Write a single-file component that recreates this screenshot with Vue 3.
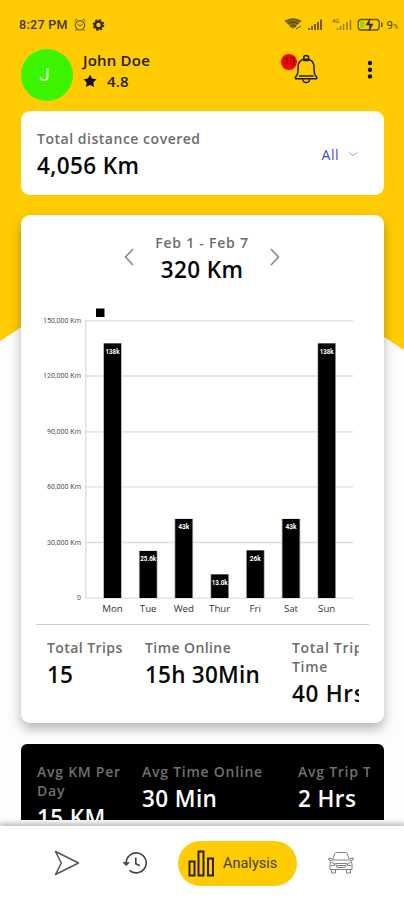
<script setup>
const bars = [
  { day: 'Mon', x: 112.5, top: 343.5, label: '138k', lw: 14 },
  { day: 'Tue', x: 148.2, top: 551, label: '25.6k', lw: 16 },
  { day: 'Wed', x: 183.8, top: 519, label: '43k', lw: 11 },
  { day: 'Thur', x: 219.7, top: 574.5, label: '13.0k', lw: 16 },
  { day: 'Fri', x: 255.3, top: 550.5, label: '26k', lw: 11 },
  { day: 'Sat', x: 291, top: 519, label: '43k', lw: 11 },
  { day: 'Sun', x: 326.7, top: 343.5, label: '138k', lw: 14 },
]
const grid = [
  { y: 320.8, label: '150,000 Km', w: 38 },
  { y: 376, label: '120,000 Km', w: 38 },
  { y: 431.8, label: '90,000 Km', w: 34 },
  { y: 486.8, label: '60,000 Km', w: 34 },
  { y: 542.5, label: '30,000 Km', w: 34 },
  { y: 598.2, label: '0', w: 4 },
]
const trips = [
  { label: 'Total Trips', value: '15' },
  { label: 'Time Online', value: '15h 30Min' },
  { label: 'Total Trip Time', value: '40 Hrs' },
]
const averages = [
  { label: 'Avg KM Per Day', value: '15 KM' },
  { label: 'Avg Time Online', value: '30 Min' },
  { label: 'Avg Trip Time', value: '2 Hrs' },
]
</script>

<template>
  <div class="phone">
    <svg class="backdrop" width="404" height="360" viewBox="0 0 404 360">
      <path d="M0 0H404V350L384 337Q202 222 20 328L0 341Z" fill="#ffcc03" />
    </svg>

    <div class="status">
      <span class="clock">8:27 PM</span>
      <svg class="status-left" width="34" height="16" viewBox="0 0 34 16" fill="none" stroke="#594b12">
        <circle cx="7" cy="8.3" r="4.7" stroke-width="1.1" />
        <path d="M1.5 4 4 1.8M12.5 4 10 1.8M4.6 7 7 9.2 9.5 7M3.5 12.5 2.5 14M10.5 12.5 11.5 14" />
        <circle cx="25.5" cy="8" r="3.5" stroke="#30290b" stroke-width="2.5" />
        <circle cx="25.5" cy="8" r="5.2" stroke="#30290b" stroke-width="1.2" stroke-dasharray="2.2 1.88" />
      </svg>
      <svg class="status-right" width="120" height="22" viewBox="284 14 120 22" fill="none" stroke="#5d4e0d">
        <path d="M285.5 21.5Q293 16.5 300.5 21.5L293 29Z" fill="#8c730a" stroke="none" />
        <path d="M285 21.5Q293 16.5 301 21.5M287.5 24Q293 20 298.5 24M290 26.8Q293 24.5 296 26.8" stroke-width="1.5" />
        <path d="m296 29 5-3" />
        <path d="M309 30v-2M312 30v-4M315 30v-6M318 30v-8M321 30V19.5" stroke-width="1.7" />
        <path d="M337.5 30v-2M340.5 30v-4M343.5 30v-6M347 30v-8M350.5 30V20" stroke="#947b17" stroke-width="1.5" />
        <text x="332" y="23" font-size="6" fill="#5d4e0d" stroke="none">4G</text>
        <rect x="358.2" y="19.5" width="21" height="10.5" rx="3" stroke-width="1.3" />
        <rect x="360" y="21.5" width="4.5" height="6.5" fill="#acd000" stroke="none" />
        <path d="m370 19-4 6h4l-1 6 4-7h-4Z" fill="#312800" stroke="#312800" stroke-width=".6" />
        <path d="M381.8 22.5v4.5" stroke-width="1.5" />
        <text x="386.5" y="28.5" font-size="11.5" fill="#473b0a" stroke="none">9</text>
        <text x="393.5" y="29" font-size="6.5" fill="#473b0a" stroke="none">%</text>
      </svg>
    </div>

    <header class="profile">
      <div class="avatar">J</div>
      <div class="who">
        <div class="name">John Doe</div>
        <div class="rating">
          <svg width="14" height="14" viewBox="0 0 24 24"><path d="m12 .8 3.5 7.1 7.8 1.1-5.6 5.6 1.3 7.8-7-3.7-7 3.7 1.3-7.8L.7 9l7.8-1.1Z" fill="#17130a" /></svg>
          <span>4.8</span>
        </div>
      </div>
      <div class="bell">
        <svg width="24" height="30" viewBox="294 54 24 30" fill="none" stroke="#211b00" stroke-width="1.5" stroke-linejoin="round">
          <path d="M303.7 59.2V57.8q0-2.3 2.5-2.3t2.5 2.3v1.4M303.5 59.2q-5.4 1.5-5.4 8 0 6.2-1.3 8.2l-1.3 1.5v1.9h21.2v-1.9l-1.4-1.5q-1.3-2-1.3-8.2 0-6.5-5.4-8Z" />
          <path d="M302.8 79.2q.2 3.3 3.4 3.3t3.4-3.3M299 76h14.5M303.3 60.6h5.8" />
        </svg>
        <span class="badge">10</span>
      </div>
      <svg class="more" width="6" height="20" viewBox="0 0 6 20" fill="#171300"><circle cx="3" cy="3" r="2.2" /><circle cx="3" cy="9.7" r="2.2" /><circle cx="3" cy="16.4" r="2.2" /></svg>
    </header>

    <main class="scroll">
      <section class="card total">
        <div>
          <div class="label">Total distance covered</div>
          <div class="value">4,056 Km</div>
        </div>
        <div class="filter">
          <span>All</span>
          <svg width="10" height="6" viewBox="0 0 10 6" fill="none" stroke="#78b4e4"><path d="m.8 1.5 4.2 3 4.2-3" /></svg>
        </div>
      </section>

      <section class="card week">
        <div class="range">
          <svg width="10" height="18" viewBox="0 0 10 18" fill="none" stroke="#888" stroke-width="1.6"><path d="M9 1 1.5 9 9 17" /></svg>
          <div class="period">
            <div class="label">Feb 1 - Feb 7</div>
            <div class="value">320 Km</div>
          </div>
          <svg width="10" height="18" viewBox="0 0 10 18" fill="none" stroke="#888" stroke-width="1.6"><path d="m1 1 7.5 8L1 17" /></svg>
        </div>

        <svg class="chart" width="363" height="330" viewBox="21 295 363 330">
          <rect x="96" y="308.5" width="8.5" height="8.5" fill="#000" />
          <g v-for="g in grid" :key="g.label">
            <path :d="`M85 ${g.y}H353`" stroke="#dedede" stroke-width="1.3" />
            <text class="axis" x="81" :y="g.y + 2.2" text-anchor="end" :textLength="g.w" lengthAdjust="spacingAndGlyphs">{{ g.label }}</text>
          </g>
          <path d="M85.8 320.5V598.5" stroke="#d8d8d8" stroke-width="1.2" />
          <g v-for="b in bars" :key="b.day">
            <rect :x="b.x - 9.3" :y="b.top - .3" width="18.6" :height="598.3 - b.top" fill="#aaa" />
            <rect :x="b.x - 8.5" :y="b.top" width="17" :height="598 - b.top" fill="#000" />
            <text class="bar-label" :x="b.x" :y="b.top + 10" text-anchor="middle" :textLength="b.lw" lengthAdjust="spacingAndGlyphs">{{ b.label }}</text>
            <text class="day" :x="b.x" y="612" text-anchor="middle">{{ b.day }}</text>
          </g>
        </svg>

        <div class="stats">
          <div v-for="s in trips" :key="s.label">
            <div class="label">{{ s.label }}</div>
            <div class="value">{{ s.value }}</div>
          </div>
        </div>
      </section>

      <section class="card averages">
        <div class="avg-row">
          <div v-for="s in averages" :key="s.label">
            <div class="label">{{ s.label }}</div>
            <div class="value">{{ s.value }}</div>
          </div>
        </div>
      </section>
    </main>

    <nav class="tabs">
      <svg class="send" width="26" height="26" viewBox="0 0 26 26" fill="none" stroke="#555" stroke-width="1.5" stroke-linejoin="round"><path d="M1.5 1.5 24.5 13 1.5 24.5 7.3 13Z" /></svg>
      <svg class="history" width="26" height="26" viewBox="0 0 26 26" fill="none" stroke="#444" stroke-width="1.6">
        <path d="M4.2 14.5V12.5A10 10 0 1 1 7.5 20.3" /><path d="m1 12.5 3.3 3.2 3-3.2Z" fill="#444" stroke-width=".7" /><path d="M13.8 7.5v6.3l4 2" />
      </svg>
      <div class="active">
        <svg width="27" height="27" viewBox="0 0 27 27" fill="none" stroke="#241c00" stroke-width="1.9"><path d="M1.5 11.5h5v14h-5ZM10.5 1.5h5v24h-5ZM20 8.5h5v17h-5Z" /></svg>
        <span>Analysis</span>
      </div>
      <svg class="car" width="26" height="24" viewBox="0 0 26 24" fill="none" stroke="#808080" stroke-width="1" stroke-linejoin="round">
        <path d="M4.5 9 6.8 2.5Q7.2 1.5 8.5 1.5h9q1.3 0 1.7 1L21.5 9M4.5 9h17M4.5 9q-2.5 1.2-2.5 4v5.5h22V13q0-2.8-2.5-4M3.5 18.5V22h4v-3.5M18.5 18.5V22h4v-3.5M4 7.5.8 7v2l2.4.6M22 7.5l3.2-.5v2l-2.4.6M7.5 12.5h11l-1.5 4H9ZM3.2 11.5l3.3 1v2H3M22.8 11.5l-3.3 1v2H23M9 14.5h8" />
      </svg>
    </nav>
  </div>
</template>

<style>
body { margin: 0; background: #fdfdfd; }
</style>

<style scoped>
* { box-sizing: border-box; }
.phone { position: relative; isolation: isolate; display: flex; flex-direction: column; width: 404px; height: 900px; overflow: hidden; background: #fdfdfd; color: #080808; font-family: "Open Sans", sans-serif; white-space: nowrap; }
.phone svg { display: block; flex: none; }
.backdrop { position: absolute; top: 0; left: 0; z-index: -1; }
.status { display: flex; height: 36px; padding-top: 14px; padding-left: 19px; font-family: Roboto, sans-serif; }
.clock { width: 54px; font-size: 12.5px; line-height: 22px; font-weight: 500; color: #3f350c; letter-spacing: .3px; }
.status-left { margin-top: 3px; }
.status-right { margin-left: auto; }
.profile { display: flex; height: 75px; padding: 13px 31px 0 21px; }
.avatar { width: 52px; height: 52px; padding-right: 5px; border-radius: 50%; background: #3bf500; color: #eaffdc; font: 400 19px/52px Roboto, sans-serif; text-align: center; }
.who { width: 221px; padding: 1px 0 0 10px; font-size: 15px; font-weight: 550; line-height: 20px; letter-spacing: .2px; color: #1f1a05; }
.rating { display: flex; align-items: center; gap: 10px; height: 22px; }
.bell { position: relative; margin-top: 5px; }
.badge { position: absolute; left: -13px; top: 0; width: 16px; height: 16px; border-radius: 50%; background: #f60404; color: #680000; font: 10px/16px Roboto, sans-serif; text-align: center; }
.more { margin: 11px 0 0 auto; }
.scroll { display: flex; flex-direction: column; height: 709px; padding: 0 20px 0 21px; overflow: hidden; }
.card { flex: none; border-radius: 9px; background: #fff; }
.label { font-size: 14px; line-height: 19px; font-weight: 550; color: #6c6c6c; letter-spacing: .52px; }
.value { padding-top: 3px; font-size: 22.5px; line-height: 30px; font-weight: 580; letter-spacing: .4px; }
.total { display: flex; justify-content: space-between; height: 84px; padding: 18px 26px 0 16px; }
.filter { display: flex; gap: 9px; height: 50px; align-items: center; font-size: 14px; font-weight: 500; letter-spacing: .5px; color: #3949dc; }
.week { height: 508px; margin-top: 20px; box-shadow: 0 6px 12px rgba(0, 0, 0, .28); }
.range { display: flex; align-items: flex-start; justify-content: center; height: 80px; padding-top: 18px; padding-right: 1px; }
.range > svg { margin-top: 15px; }
.period { width: 136px; text-align: center; }
.period .label { letter-spacing: .75px; }
.axis { font: 6.5px Roboto, sans-serif; fill: #555; }
.bar-label { font: 700 6.5px Roboto, sans-serif; fill: #fff; }
.day { font: 9.7px "Open Sans", sans-serif; fill: #333; }
.chart { background: linear-gradient(#cfcfcf, #cfcfcf) 15px 329px / 333px 1px no-repeat; }
.stats { display: grid; grid-template-columns: 98px 147px 67px; height: 98px; margin: 0 25px 0 16px; padding: 13px 0 0 10px; overflow: hidden; }
.stats .label { letter-spacing: .42px; }
.stats .value { letter-spacing: .25px; }
.stats > div:last-child, .avg-row > div:first-child { white-space: normal; }
.stats > div:last-child { width: 80px; }
.stats > div:last-child .label { letter-spacing: .7px; }
.stats > div:last-child .value { letter-spacing: .7px; }
.averages { height: 128px; margin-top: 21px; border-radius: 6px; background: #000; }
.avg-row { display: grid; grid-template-columns: 105px 156px 73px; margin: 0 14px 0 16px; padding-top: 18px; overflow: hidden; }
.averages .label { color: #707070; letter-spacing: .75px; }
.averages .value { color: #fff; }
.averages .avg-row > div:first-child { width: 95px; }
.tabs { position: relative; display: flex; align-items: center; height: 74px; margin-top: 6px; padding: 0 50px 0 54px; background: #fff; box-shadow: 0 -2px 5px 1px rgba(0, 0, 0, .24); }
.history { margin-left: 42px; }
.active { display: flex; align-items: center; gap: 8px; width: 119px; height: 45px; margin-left: 30px; padding-left: 10px; border-radius: 23px; background: #ffcc03; color: #4c3d07; font: 14.5px Roboto, sans-serif; }
.car { margin-left: 31px; }
</style>
